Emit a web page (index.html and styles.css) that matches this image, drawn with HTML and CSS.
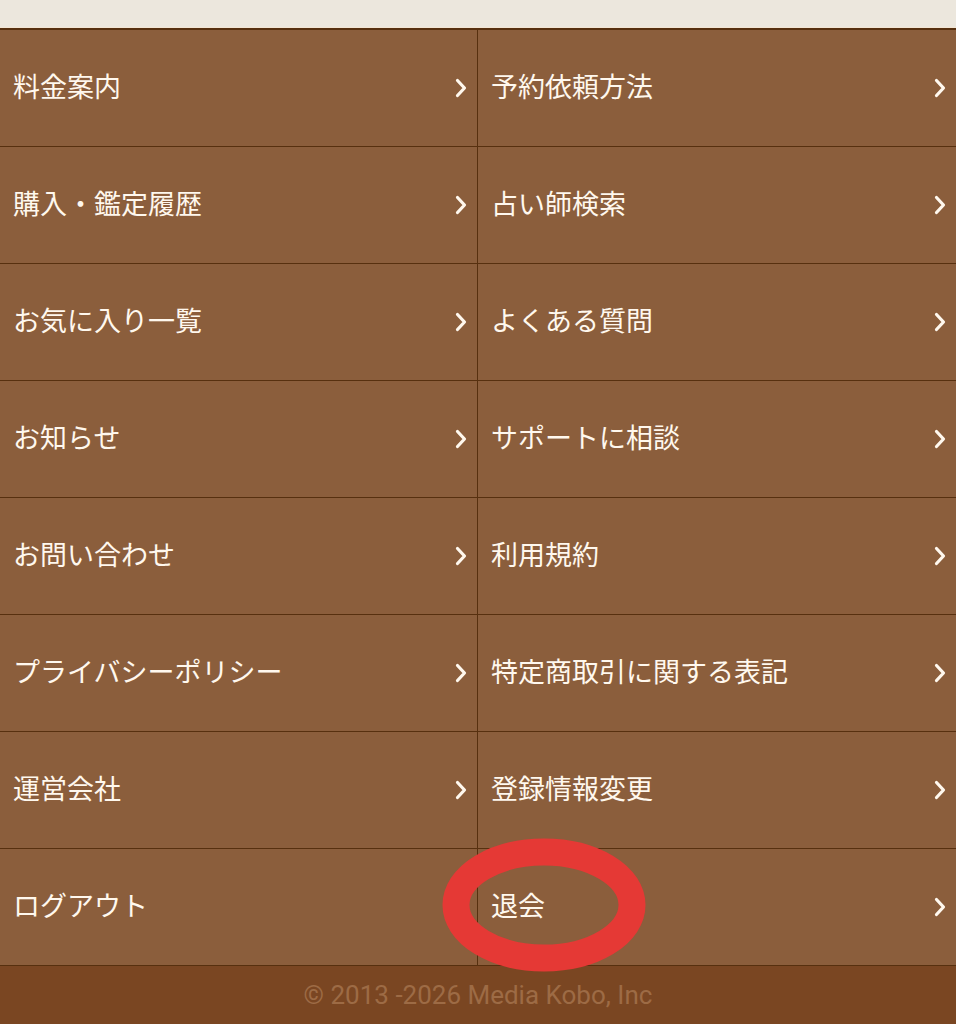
FILE: index.html
```html
<!DOCTYPE html>
<html lang="ja">
<head>
  <meta charset="UTF-8" />
  <meta name="viewport" content="width=device-width, initial-scale=1.0" />
  <title>メニュー</title>
  <link rel="stylesheet" href="styles.css">
</head>
<body>
  <div class="topbar"></div>

  <nav class="menu">
    <a href="#">料金案内</a>
    <a href="#">予約依頼方法</a>
    <a href="#">購入・鑑定履歴</a>
    <a href="#">占い師検索</a>
    <a href="#">お気に入り一覧</a>
    <a href="#">よくある質問</a>
    <a href="#">お知らせ</a>
    <a href="#">サポートに相談</a>
    <a href="#">お問い合わせ</a>
    <a href="#">利用規約</a>
    <a href="#">プライバシーポリシー</a>
    <a href="#">特定商取引に関する表記</a>
    <a href="#">運営会社</a>
    <a href="#">登録情報変更</a>
    <a href="#">ログアウト</a>
    <a href="#" class="marked">退会
      <svg class="circle" width="230" height="160" viewBox="0 0 230 160">
        <ellipse cx="115" cy="80" rx="88" ry="53" fill="none" stroke="#e53935" stroke-width="27" />
      </svg>
    </a>
  </nav>

  <footer>
    &copy; 2013 -2026 Media Kobo, Inc
  </footer>
</body>
</html>
```

FILE: styles.css
```css
body {
  margin: 0;
  padding: 0;
  background-color: #7a4622;
  font-family: 'Noto Sans CJK JP', 'Noto Sans', sans-serif;
}

.topbar {
  height: 27px;
  background-color: #ece7dd;
  border-bottom: 1px solid #f3e6d4;
}

.menu {
  display: grid;
  grid-template-columns: 477px 1fr;
  border-top: 2px solid #57300f;
  background-color: #57300f;
  gap: 1px;
  padding-bottom: 1px;
}

.menu a {
  position: relative;
  display: flex;
  align-items: center;
  height: 111px;
  padding-left: 13px;
  padding-bottom: 5px;
  background-color: #8b5e3c;
  color: #fff8ee;
  font-size: 27px;
  font-weight: 400;
  text-decoration: none;
}

.menu a:nth-child(odd) {
  width: 464px;
}

/* chevron */
.menu a::after {
  content: '';
  position: absolute;
  right: 10px;
  top: 50%;
  width: 12px;
  height: 20px;
  margin-top: -10px;
  background: url("data:image/svg+xml,%3Csvg xmlns='http://www.w3.org/2000/svg' width='12' height='20' viewBox='0 0 12 20'%3E%3Cpath d='M2.5 2.5 L9.5 10 L2.5 17.5' fill='none' stroke='%23fff8ee' stroke-width='3.2' stroke-linecap='round' stroke-linejoin='round'/%3E%3C/svg%3E") no-repeat;
}

.menu a.marked {
  z-index: 2;
}

.circle {
  position: absolute;
  left: -49px;
  top: -24px;
}

footer {
  height: 58px;
  background-color: #7a4622;
  color: #9d6b45;
  font-family: Roboto, 'Liberation Sans', sans-serif;
  font-size: 26px;
  display: flex;
  align-items: center;
  justify-content: center;
}
```
